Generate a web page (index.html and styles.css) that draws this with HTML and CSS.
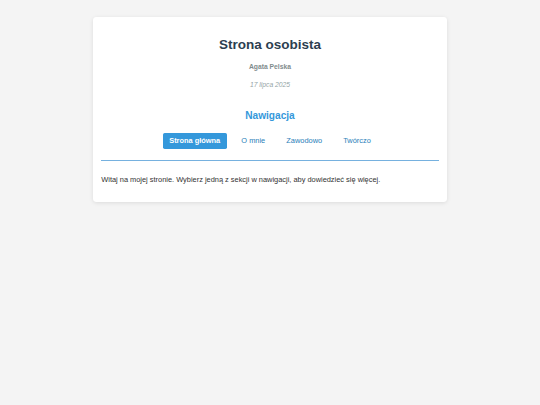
FILE: index.html
```html
<!DOCTYPE html>
<html lang="pl">
<head>
<meta charset="utf-8">
<title>Strona osobista</title>
<link rel="stylesheet" href="styles.css">
</head>
<body>
<div class="card">
  <header class="header">
    <h1 class="title">Strona osobista</h1>
    <p class="author">Agata Pelska</p>
    <p class="date">17 lipca 2025</p>
  </header>
  <nav class="nav">
    <h2 class="nav-title">Nawigacja</h2>
    <ul class="nav-list">
      <li><a class="nav-link active" href="#">Strona główna</a></li>
      <li><a class="nav-link" href="#">O mnie</a></li>
      <li><a class="nav-link" href="#">Zawodowo</a></li>
      <li><a class="nav-link" href="#">Twórczo</a></li>
    </ul>
  </nav>
  <main class="content">
    <p class="intro">Witaj na mojej stronie. Wybierz jedną z sekcji w nawigacji, aby dowiedzieć się więcej.</p>
  </main>
</div>
</body>
</html>
```
FILE: styles.css
```css
body {
  margin: 0;
  padding: 17px 0;
  background: #f4f4f4;
  font-family: "Liberation Sans", Arial, sans-serif;
  font-size: 6.75px;
  line-height: 1.6;
  color: #333;
}
.card {
  max-width: 337.5px;
  margin: 0 auto;
  padding: 8.44px;
  background: #fff;
  border-radius: 3.4px;
  box-shadow: 0 1px 4px rgba(0, 0, 0, 0.1);
}
.header {
  text-align: center;
}
.title {
  margin: 9.05px 0 0;
  font-size: 13.5px;
  color: #2c3e50;
}
.author {
  margin: 6.33px 0 0;
  color: #7f8c8d;
  font-weight: bold;
}
.date {
  margin: 6.75px 0 0;
  color: #95a5a6;
  font-style: italic;
}
.nav {
  text-align: center;
  padding-bottom: 11px;
  border-bottom: 1px solid #76b1df;
}
.nav-title {
  margin: 17.3px 0 0;
  font-size: 10.125px;
  color: #3498db;
}
.nav-list {
  list-style: none;
  margin: 8.86px 0 0;
  padding: 0;
  display: flex;
  justify-content: center;
  gap: 8.44px;
}
.nav-link {
  display: block;
  padding: 3.375px 6.33px;
  font-size: 7.425px;
  line-height: 9px;
  color: #2980b9;
  text-decoration: none;
  border-radius: 1.7px;
}
.nav-link.active {
  background: #3498db;
  color: #fff;
  font-weight: bold;
}
.content {
  padding-top: 13.5px;
}
.intro {
  margin: 0 0 7px;
  font-size: 7.425px;
}
```
